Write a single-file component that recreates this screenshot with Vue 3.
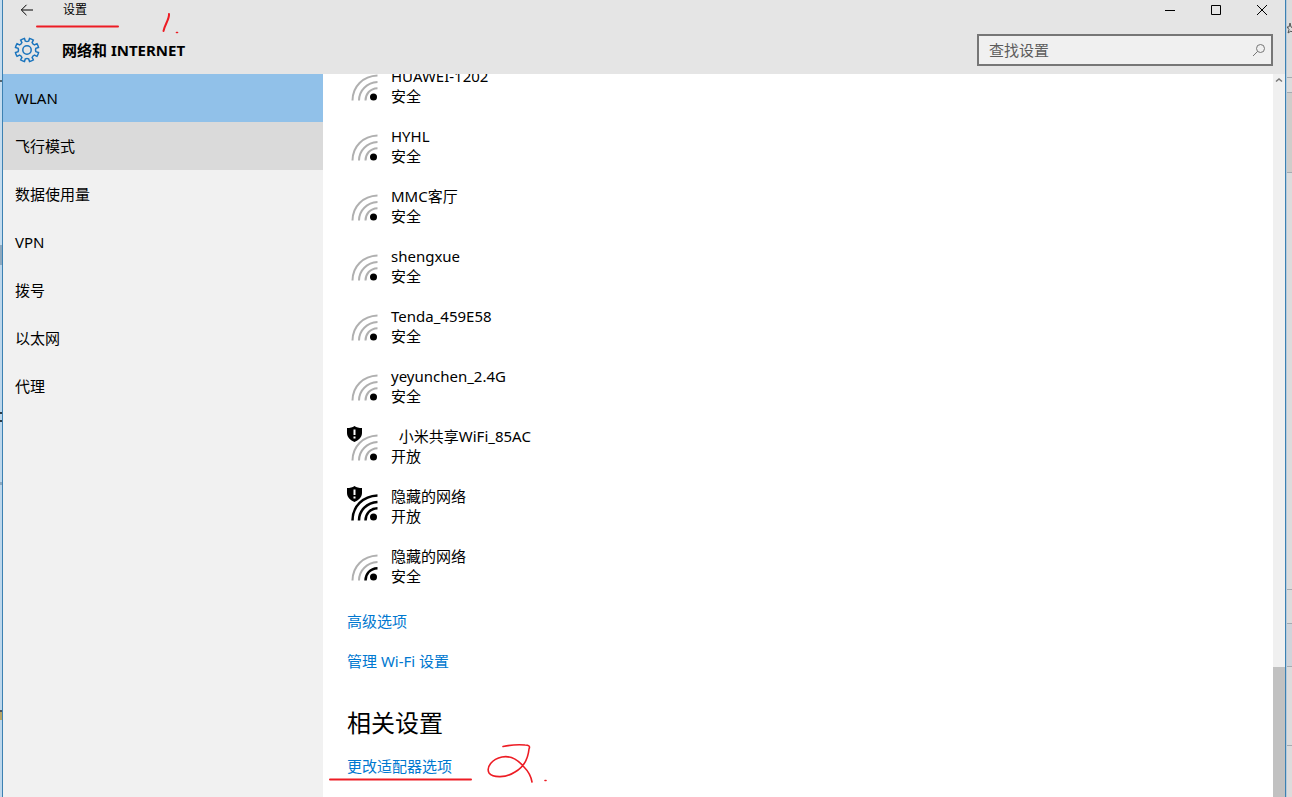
<script setup>
import { ref } from 'vue'

const query = ref('')

const sections = ['WLAN', '飞行模式', '数据使用量', 'VPN', '拨号', '以太网', '代理']
const current = ref('WLAN')

const networks = [
  { name: 'HUAWEI-1202', state: '安全', bars: 0 },
  { name: 'HYHL', state: '安全', bars: 0 },
  { name: 'MMC客厅', state: '安全', bars: 0 },
  { name: 'shengxue', state: '安全', bars: 0 },
  { name: 'Tenda_459E58', state: '安全', bars: 0 },
  { name: 'yeyunchen_2.4G', state: '安全', bars: 0 },
  { name: '\u00a0\u00a0小米共享WiFi_85AC', state: '开放', bars: 0, open: true },
  { name: '隐藏的网络', state: '开放', bars: 3, open: true },
  { name: '隐藏的网络', state: '安全', bars: 1 },
]

const arcs = [
  'M18.500 34.500 C18.500 28 23 22.500 30.500 22.200',
  'M12 34.500 C12 24.500 20 16.500 30.500 16',
  'M5.500 34.500 C5.500 20.500 16 10 30.500 9.500',
]

const point = (radius, degrees) => {
  const t = (degrees * Math.PI) / 180
  return `${(13 + radius * Math.cos(t)).toFixed(2)} ${(13 + radius * Math.sin(t)).toFixed(2)}`
}
const gear =
  Array.from({ length: 8 }, (_, i) => {
    const a = i * 45 + 22.5
    return `${i ? 'L' : 'M'}${point(9, a - 12)} L${point(11.8, a - 10)} A11.8 11.8 0 0 1 ${point(11.8, a + 10)} L${point(9, a + 12)} A4.2 4.2 0 0 0 ${point(9, a + 33)}`
  }).join(' ') + ' Z'
</script>

<template>
  <div class="desktop">
    <div class="backdrop left" aria-hidden="true"></div>
    <div class="window">
      <header class="header">
        <div class="titlebar">
          <button class="back" aria-label="返回">
            <svg width="14" height="12" viewBox="0 0 14 12"><path d="M13 6H1.500M6.500 .8L1.300 6l5.200 5.200" /></svg>
          </button>
          <span class="caption">设置</span>
          <div class="controls">
            <button aria-label="最小化">
              <svg width="12" height="12" viewBox="0 0 12 12"><path d="M1 6.500h10" /></svg>
            </button>
            <button aria-label="最大化">
              <svg width="12" height="12" viewBox="0 0 12 12"><path d="M1.500 1.500h9v9h-9z" /></svg>
            </button>
            <button aria-label="关闭">
              <svg width="12" height="12" viewBox="0 0 12 12"><path d="M1 1l10 10M11 1L1 11" /></svg>
            </button>
          </div>
        </div>
        <div class="heading">
          <svg class="gear" width="26" height="26" viewBox="0 0 26 26">
            <path :d="gear" />
            <circle cx="13" cy="13" r="4.200" />
          </svg>
          <h1>网络和 INTERNET</h1>
          <label class="search">
            <input v-model="query" type="text" placeholder="查找设置" aria-label="查找设置" />
            <svg width="14" height="14" viewBox="0 0 14 14"><circle cx="8.500" cy="5.500" r="4" /><path d="M5.600 8.400L1 13" /></svg>
          </label>
        </div>
      </header>

      <div class="body">
        <nav class="sidebar">
          <button
            v-for="s in sections"
            :key="s"
            :class="{ active: s === current, hovered: s === '飞行模式' }"
            @click="current = s"
          >{{ s }}</button>
        </nav>

        <main class="content">
          <ul class="networks">
            <li v-for="(n, i) in networks" :key="i">
              <svg class="wifi" width="32" height="40" viewBox="0 0 32 40">
                <path v-for="(d, k) in arcs" :key="k" :d="d" class="arc" :class="{ on: k < n.bars }" />
                <circle cx="26.500" cy="31" r="3.500" />
                <g v-if="n.open">
                  <path class="shield" d="M7.500 0C5.500 1.500 3 2 0 2V7C0 11.500 3.500 14 7.500 16C11.500 14 15 11.500 15 7V2C12 2 9.500 1.500 7.500 0Z" />
                  <path class="mark" d="M7.500 3.500V9M7.500 10.500v2" />
                </g>
              </svg>
              <div>
                <div>{{ n.name }}</div>
                <div>{{ n.state }}</div>
              </div>
            </li>
          </ul>
          <a class="link" href="#">高级选项</a>
          <a class="link" href="#">管理 Wi-Fi 设置</a>
          <h2>相关设置</h2>
          <div class="related">
            <a class="link" href="#">更改适配器选项</a>
            <svg class="pen second" width="222" height="46" viewBox="0 0 222 46" aria-hidden="true">
              <path d="M3 37.500H144" />
              <path class="thin" d="M176 4.500C183 3 190 2.500 198 3Q204 3 202 7C201 17 197 25 188 30C179 36 166 36 162 31C159 25 165 17 175 15C185 13 192 19 197 25C202 30 204 34 205 40" />
              <path class="thin" d="M218 38.500h1" />
            </svg>
          </div>
        </main>

        <div class="scrollbar" aria-hidden="true">
          <svg width="12" height="12" viewBox="0 0 12 12"><path d="M3 7.500L6 5L9 7.500" /></svg>
          <div class="thumb"></div>
        </div>
      </div>

      <svg class="pen one" width="146" height="26" viewBox="0 0 146 26" aria-hidden="true">
        <path d="M2 16.500H83" />
        <path d="M134 4C134.500 9 130 14 128.500 21" />
        <path class="thin" d="M141.500 22.500h1" />
      </svg>
    </div>
    <div class="backdrop right" aria-hidden="true">
      <span class="tile top"><svg width="6" height="12" viewBox="0 0 6 12"><path d="M6 6L4 5L3 1L2 5L0 5L2 7.500L1 11L4 9L6 11" /></svg></span>
      <span class="tile card"></span>
      <span class="tile tall"></span>
      <span class="tile a"></span>
      <span class="tile b"></span>
      <span class="tile c"></span>
      <span class="tile d"></span>
    </div>
  </div>
</template>

<style>
body {
  margin: 0;
  overflow: hidden;
}
</style>

<style scoped>
* {
  box-sizing: border-box;
}
.desktop {
  display: grid;
  grid-template-columns: 2px minmax(0, 1fr) 6px;
  height: 100vh;
  font: 15px/20px "Noto Sans", "Noto Sans CJK SC", sans-serif;
  color: #000;
}
.backdrop {
  background: #dcdcdc;
}
.backdrop.left {
  background: linear-gradient(
    #c4dcef 0 80px, #56666f 80px 82px, #c4dcef 82px 245px, #8ea9bf 245px 265px,
    #bdd7ec 265px 412px, #2d3a44 412px 414px, #bdd7ec 414px 420px, #2d3a44 420px 422px,
    #bdd7ec 422px 482px, #8ea9bf 482px 485px, #bdd7ec 485px 710px, #4b5560 710px 712px,
    #b9a566 712px 720px, #bdd7ec 720px
  );
}
.backdrop.right {
  display: flex;
  flex-direction: column;
  border-left: 1px solid #b6cadb;
}
.tile {
  flex: none;
  border-bottom: 1px solid #a5abb1;
}
.tile svg {
  display: block;
  margin-top: 22px;
  fill: none;
  stroke: #555;
}
.top { height: 78px; }
.card { height: 15px; }
.tall { height: 80px; background: #cfcdca; }
.a { height: 417px; }
.b { height: 34px; }
.c { height: 43px; background: #d0d4da; }
.d { height: 79px; }
.window {
  position: relative;
  display: flex;
  flex-direction: column;
  min-height: 0;
  border: solid #3c81b2;
  border-width: 0 1px;
  background: #fff;
}
button {
  margin: 0;
  padding: 0;
  border: 0;
  background: none;
  color: inherit;
  font: inherit;
}
.header {
  flex: none;
  background: #e5e5e5;
}
.titlebar {
  display: flex;
  align-items: center;
  height: 20px;
}
.titlebar svg {
  display: block;
  margin: auto;
  fill: none;
  stroke: #000;
}
.back {
  width: 48px;
  height: 20px;
}
.caption {
  margin-left: 12px;
  font-size: 12px;
}
.controls {
  display: flex;
  margin-left: auto;
}
.controls button {
  width: 46px;
  height: 20px;
}
.heading {
  display: flex;
  align-items: center;
  height: 54px;
  padding: 6px 12px 0 11px;
}
.gear {
  fill: none;
  stroke: #1a74bd;
  stroke-width: 1.5;
}
h1 {
  margin: 0 0 0 22px;
  font-size: 15px;
  line-height: 20px;
  font-weight: 700;
}
.search {
  display: flex;
  align-items: center;
  width: 296px;
  height: 32px;
  margin-left: auto;
  padding: 0 5px 0 10px;
  border: 2px solid #767676;
  background: #f0f0f0;
}
.search input {
  flex: 1;
  min-width: 0;
  padding: 0;
  border: 0;
  outline: 0;
  background: none;
  color: #000;
  font: inherit;
}
.search input::placeholder {
  color: #5c5c5c;
}
.search svg {
  fill: none;
  stroke: #767676;
}
.body {
  display: flex;
  flex: 1;
  min-height: 0;
}
.sidebar {
  display: flex;
  flex-direction: column;
  flex: none;
  width: 320px;
  background: #f1f1f1;
}
.sidebar button {
  height: 48px;
  padding: 0 12px;
  text-align: left;
}
.sidebar .active {
  background: #91c1e9;
}
.sidebar .hovered {
  background: #dadada;
}
.content {
  flex: 1;
  min-width: 0;
  padding-left: 24px;
  overflow: hidden;
}
.networks {
  display: grid;
  gap: 20px;
  margin: -8px 0 25px;
  padding: 0;
  list-style: none;
}
.networks li {
  display: flex;
  gap: 12px;
}
.wifi {
  flex: none;
}
.arc {
  fill: none;
  stroke: #b0b0b0;
  stroke-width: 2;
}
.arc.on {
  stroke: #000;
  stroke-width: 2.5;
}
.shield {
  stroke: #fff;
  paint-order: stroke;
}
.mark {
  stroke: #fff;
  stroke-width: 2;
}
.link {
  display: block;
  width: fit-content;
  margin-bottom: 20px;
  color: #0078d0;
  text-decoration: none;
}
h2 {
  margin: 36px 0 17px;
  font-size: 24px;
  line-height: 32px;
  font-weight: 400;
}
.related {
  position: relative;
}
.pen {
  position: absolute;
  fill: none;
  stroke: #ed1c24;
  stroke-width: 2;
  stroke-linecap: round;
  pointer-events: none;
}
.pen .thin {
  stroke-width: 1.6;
}
.pen.second {
  left: -20px;
  top: -14px;
}
.pen.one {
  left: 32px;
  top: 10px;
}
.scrollbar {
  display: flex;
  flex-direction: column;
  justify-content: space-between;
  width: 12px;
  background: #f0f0f0;
}
.scrollbar svg {
  fill: none;
  stroke: #777;
  stroke-width: 1.5;
}
.thumb {
  height: 18%;
  background: #c1c1c1;
}
</style>
